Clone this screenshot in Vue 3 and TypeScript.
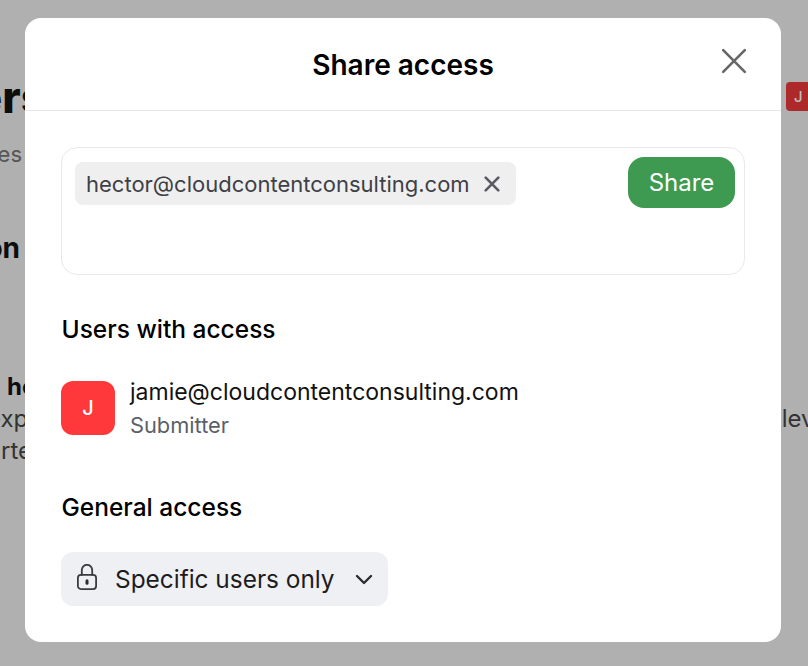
<script setup lang="ts">
const chip = 'hector@cloudcontentconsulting.com'
const owner = 'jamie@cloudcontentconsulting.com'
</script>

<template>
  <div class="page">
    <div class="backdrop">
      <div class="top">
        <h1 class="title">Users</h1>
        <span class="badge">J</span>
      </div>
      <p class="sub">Roles</p>
      <h2 class="section">Permission</h2>
      <p class="lead">help</p>
      <div class="para-row">
        <span>expert</span>
        <span>relevant</span>
      </div>
      <p class="para">rte</p>
    </div>

    <section class="modal">
      <header class="head">
        <h3>Share access</h3>
        <button class="close" aria-label="Close">
          <svg width="26" height="26" viewBox="0 0 26 26" fill="none" stroke="#666" stroke-width="2.6" stroke-linecap="round">
            <path d="M2.2 2.2 L23.8 23.8 M23.8 2.2 L2.2 23.8" />
          </svg>
        </button>
      </header>

      <div class="body">
        <div class="input">
          <span class="chip">
            {{ chip }}
            <svg width="16" height="16" viewBox="0 0 16 16" fill="none" stroke="#5a5a62" stroke-width="2.6" stroke-linecap="round">
              <path d="M1.7 1.7 L14.3 14.3 M14.3 1.7 L1.7 14.3" />
            </svg>
          </span>
          <button class="share">Share</button>
        </div>

        <h4 class="label users">Users with access</h4>
        <div class="user">
          <div class="avatar">J</div>
          <div class="info">
            <div class="email">{{ owner }}</div>
            <div class="role">Submitter</div>
          </div>
        </div>

        <h4 class="label general">General access</h4>
        <button class="select">
          <svg class="lock" width="20" height="26" viewBox="0 0 20 26" fill="none" stroke="#3a3c40" stroke-width="1.8" stroke-linecap="round" stroke-linejoin="round">
            <rect x="0.9" y="10.9" width="18.2" height="14.2" rx="3" />
            <path d="M4.8 10.9 V6 a5.2 5.2 0 0 1 10.4 0 V10.9" />
            <path d="M10 16.8 V19.2" stroke-width="3" stroke="#2b2d31" />
          </svg>
          <span class="select-text">Specific users only</span>
          <svg width="18" height="11" viewBox="0 0 18 11" fill="none" stroke="#2b2d31" stroke-width="2.4" stroke-linecap="round" stroke-linejoin="round">
            <path d="M2 2 L9 9 L16 2" />
          </svg>
        </button>
      </div>
    </section>
  </div>
</template>

<style>
html, body { margin: 0; background: #b0b0b0; }
</style>

<style scoped>
* { box-sizing: border-box; }
.page {
  position: relative;
  width: 808px;
  height: 666px;
  overflow: hidden;
  background: #b0b0b0;
  font-family: Inter, "Liberation Sans", sans-serif;
}
.backdrop { padding-top: 75px; color: #0d0d0d; }
.top { display: flex; align-items: flex-start; }
.title {
  margin: 0 auto 0 -100px; width: 146px; text-align: right;
  font-size: 44px; line-height: 44px; font-weight: 800;
}
.badge {
  width: 36px; height: 29px; margin: 7px -14px 0 0; background: #ae2a2a; border-radius: 4px;
  color: #bdbdbd; font-size: 15px; font-weight: 500; padding-left: 8px; line-height: 29px;
}
.sub {
  margin: 20px 0 0 -100px; width: 122px; text-align: right;
  font-size: 22px; line-height: 30px; color: #565656;
}
.section {
  margin: 59px 0 0 -180px; width: 200px; text-align: right; white-space: nowrap;
  font-size: 28px; line-height: 40px; font-weight: 700;
}
.lead { margin: 103px 0 0 7px; font-size: 24px; line-height: 32px; font-weight: 700; }
.para-row {
  display: flex; justify-content: space-between;
  margin: 0 -42px 0 -13px;
  font-size: 24px; line-height: 32px; color: #333;
}
.para { margin: 0 0 0 1px; font-size: 24px; line-height: 32px; color: #333; }
.modal {
  position: absolute;
  left: 25px; top: 18px;
  width: 756px; height: 624px;
  background: #fff;
  border-radius: 16px;
}
.head {
  position: relative;
  height: 93px;
  border-bottom: 1px solid #e5e5ea;
  display: flex; align-items: center; justify-content: center;
}
.head h3 { margin: 0; font-size: 28px; font-weight: 600; color: #000; position: relative; top: 1px; }
.close {
  position: absolute; right: 34px; top: 30px;
  padding: 0; border: 0; background: none; display: flex;
}
.body { padding: 36px 36px 0; }
.input {
  height: 128px;
  border: 1px solid #e8e8ee;
  border-radius: 16px;
  padding: 9px 9px 0 13px;
  display: flex; justify-content: space-between; align-items: flex-start;
}
.chip {
  margin-top: 5px;
  height: 43px;
  padding: 0 16px 0 11px;
  background: #efeff0;
  border-radius: 8px;
  display: flex; align-items: center; gap: 14px;
  font-size: 22px; color: #3f3f46;
}
.share {
  width: 107px; height: 51px;
  border: 0; border-radius: 16px;
  background: #3d9a50; color: #fff;
  font: 400 24px Inter, sans-serif;
}
.label { margin: 0; font-size: 24.5px; line-height: 32px; font-weight: 500; color: #000; padding-left: 0.5px; }
.users { margin-top: 38px; }
.user { display: flex; gap: 15px; margin-top: 36px; }
.avatar {
  width: 54px; height: 54px; border-radius: 12px;
  background: #ff383c; color: #fff;
  display: flex; align-items: center; justify-content: center;
  font-size: 20px; font-weight: 500;
}
.info { margin-top: -5px; }
.email { font-size: 23px; line-height: 32px; color: #111; }
.role { font-size: 21.8px; line-height: 30px; color: #5b5f69; margin-top: 2px; }
.general { margin-top: 51px; }
.select {
  margin-top: 29px;
  height: 54px; width: 327px;
  border: 0; border-radius: 12px;
  background: #eff0f4;
  display: flex; align-items: center;
  padding: 0 15px 0 16px;
  color: #1c1c1e;
}
.lock { margin-bottom: 4px; }
.select-text { font: 400 24.4px Inter, sans-serif; margin: 0 auto 0 18px; }
</style>
